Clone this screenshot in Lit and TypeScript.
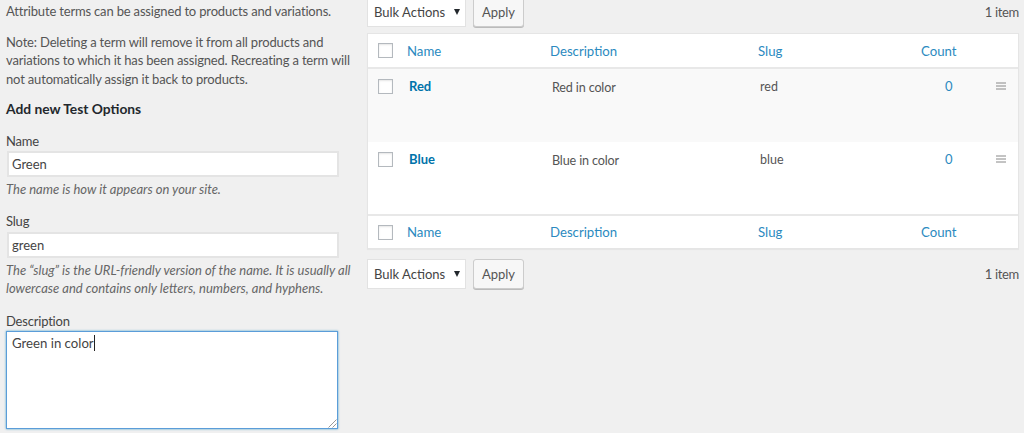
import { LitElement, html, css } from "lit";
import { customElement } from "lit/decorators.js";

@customElement("app-root")
export class AppRoot extends LitElement {
  static styles = css`
    :host { display: block; width: 1024px; height: 433px; overflow: hidden; background: #f0f0f0;
      font-family: Lato, "Open Sans", sans-serif; font-size: 13px; color: #555; }
    * { box-sizing: border-box; }
    .page { display: flex; gap: 9px; padding-left: 6px; height: 433px; }
    .left { width: 352px; flex: none; display: flex; flex-direction: column; padding-top: 2px; }
    .left p { margin: 0; line-height: 18.5px; letter-spacing: -0.17px; }
    .left p.note { margin-top: 12px; }
    h3 { margin: 11px 0 0; font-size: 13.8px; font-weight: 700; line-height: 20px; color: #23282d; }
    label { display: block; line-height: 18px; color: #444; letter-spacing: -0.2px; }
    .field { margin-top: 13px; }
    .input { width: 332px; height: 26px; margin: 1px 0 0 1px; border: 2px solid #e4e4e4; background: #fff; display: flex; align-items: center;
      padding: 0 3px; color: #444; }
    .slug .input { margin-top: 2px; }
    .left p.hint { font-style: italic; color: #666; line-height: 18.5px; margin-top: 3px; letter-spacing: 0; }
    .area { position: relative; width: 332px; height: 98px; margin-top: 1px; background: #fff; border: 1px solid #5b9dd9;
      box-shadow: 0 0 2px rgba(30,140,190,.8); padding: 1px 5px; font-size: 13.2px; color: #444; line-height: 20px; }
    .field.desc { margin-top: 14px; }
    .caret { border-right: 1px solid #222; }
    .grip { position: absolute; right: 0; bottom: 0; width: 10px; height: 10px; }

    .right { width: 652px; flex: none; display: flex; flex-direction: column; }
    .bar { display: flex; align-items: center; gap: 7px; height: 34px; }
    .bar.top { margin-top: -5px; margin-bottom: 4px; }
    .bar.bottom { margin-top: 8px; }
    .select { width: 99px; height: 30px; flex: none; background: #fff; border: 1px solid #e2e2e2; display: flex; align-items: center;
      justify-content: space-between; padding: 0 5px 0 6px; color: #444; }
    .tri { width: 0; height: 0; border-left: 3.5px solid transparent; border-right: 3.5px solid transparent; border-top: 6px solid #23282d; margin-top: -1px; }
    .btn { width: 51px; height: 30px; flex: none; background: #f7f7f7; border: 1px solid #ccc; border-radius: 3px; box-shadow: 0 1px 0 #bbb;
      display: flex; align-items: center; justify-content: center; color: #555; }
    .count { margin-left: auto; color: #555; letter-spacing: -0.3px; }
    .table { width: 652px; border: 1px solid #e5e5e5; background: #fff; box-shadow: 0 1px 1px rgba(0,0,0,.04); }
    .row { display: grid; grid-template-columns: 39px 143px 208px 163px 1fr; }
    .row.head { height: 34px; align-items: center; color: #2b8ac0; font-size: 13.2px; }
    .row.head.top { border-bottom: 2px solid #e8e8e8; height: 35px; }
    .row.head.foot { border-top: 2px solid #e8e8e8; height: 34px; }
    .row.item { height: 72.5px; align-items: start; padding-top: 9px; }
    .row.item.alt { background: #f9f9f9; }
    .cb { width: 15px; height: 15px; margin-left: 10px; background: #fff; border: 1px solid #b4b9be; box-shadow: inset 0 1px 2px rgba(0,0,0,.1); }
    .row.item .cb { margin-top: 1px; }
    .n { padding-left: 2px; color: #0073aa; font-weight: 700; }
    .d { padding: 2px 0 0 2px; font-size: 12.6px; letter-spacing: -0.15px; }
    .s { padding: 1px 0 0 2px; font-size: 12.5px; }
    .c-wrap { display: flex; justify-content: space-between; align-items: center; }
    .c { margin-left: 24px; color: #2b8ac0; }
    .h { width: 10px; height: 8px; margin-right: 12px; flex: none; }
  `;

  private handle() {
    return html`<svg class="h" viewBox="0 0 10 8"><path d="M0 1H10M0 4H10M0 7H10" stroke="#888" stroke-width="1"/></svg>`;
  }
  private head(cls: string) {
    return html`<div class="row head ${cls}"><div class="cb"></div><div>Name</div><div>Description</div><div>Slug</div><div>Count</div></div>`;
  }
  private item(name: string, desc: string, slug: string, alt: boolean) {
    return html`<div class="row item ${alt ? "alt" : ""}">
      <div class="cb"></div><div class="n">${name}</div><div class="d">${desc}</div><div class="s">${slug}</div>
      <div class="c-wrap"><span class="c">0</span>${this.handle()}</div>
    </div>`;
  }
  private bar(cls: string) {
    return html`<div class="bar ${cls}">
      <div class="select"><span>Bulk Actions</span><span class="tri"></span></div>
      <div class="btn">Apply</div>
      <div class="count">1 item</div>
    </div>`;
  }
  render() {
    return html`<div class="page">
      <div class="left">
        <p>Attribute terms can be assigned to products and variations.</p>
        <p class="note">Note: Deleting a term will remove it from all products and variations to which it has been assigned. Recreating a term will not automatically assign it back to products.</p>
        <h3>Add new Test Options</h3>
        <div class="field"><label>Name</label><div class="input">Green</div>
          <p class="hint">The name is how it appears on your site.</p></div>
        <div class="field slug"><label>Slug</label><div class="input">green</div>
          <p class="hint">The “slug” is the URL-friendly version of the name. It is usually all lowercase and contains only letters, numbers, and hyphens.</p></div>
        <div class="field desc"><label>Description</label>
          <div class="area"><span class="caret">Green in color</span>
            <svg class="grip" viewBox="0 0 10 10"><path d="M9.5 1.5 1.5 9.5M9.5 5.5 5.5 9.5" stroke="#999" stroke-width="1" fill="none"/></svg>
          </div></div>
      </div>
      <div class="right">
        ${this.bar("top")}
        <div class="table">
          ${this.head("top")}
          ${this.item("Red", "Red in color", "red", true)}
          ${this.item("Blue", "Blue in color", "blue", false)}
          ${this.head("foot")}
        </div>
        ${this.bar("bottom")}
      </div>
    </div>`;
  }
}
